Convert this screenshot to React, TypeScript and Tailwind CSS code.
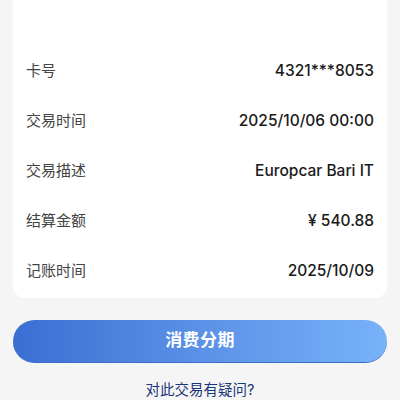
import React from 'react';

const rows = [
  { label: '卡号', value: '4321***8053' },
  { label: '交易时间', value: '2025/10/06 00:00' },
  { label: '交易描述', value: 'Europcar Bari IT' },
  { label: '结算金额', value: '¥ 540.88' },
  { label: '记账时间', value: '2025/10/09' },
];

const App: React.FC = () => {
  return (
    <div
      className="w-[400px] h-[400px] overflow-hidden bg-[#f5f5f5] px-[13px]"
      style={{ fontFamily: 'Inter, "Noto Sans CJK SC", sans-serif' }}
    >
      <div className="bg-white rounded-b-[12px] pt-[46px] pb-[2px] px-[13px]">
        {rows.map((r) => (
          <div key={r.label} className="h-[50px] flex items-center justify-between">
            <span className="text-[15px] text-[#444]">{r.label}</span>
            <span className="text-[15.5px] font-medium text-[#1a1a1a]">{r.value}</span>
          </div>
        ))}
      </div>
      <button className="mt-[22px] w-full h-[43px] rounded-full bg-gradient-to-r from-[#3b6ed3] via-[#5b91e6] to-[#78b2f9] border-b border-[#3a6cc8] text-white text-[17px] font-bold tracking-wide">
        消费分期
      </button>
      <div className="mt-[20px] text-center text-[14.5px] leading-none text-[#1a367a]">对此交易有疑问?</div>
    </div>
  );
};

export default App;
